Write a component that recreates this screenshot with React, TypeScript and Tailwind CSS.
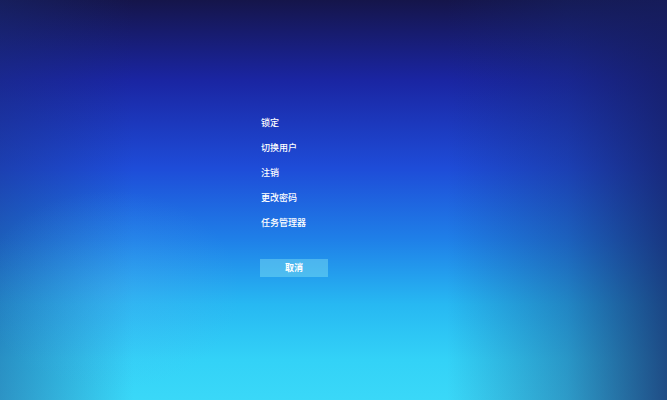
export default function App() {
  const items = ["锁定", "切换用户", "注销", "更改密码", "任务管理器"];
  return (
    <div
      className="w-[667px] h-[400px] overflow-hidden bg-[radial-gradient(ellipse_130px_100px_at_110px_290px,rgba(90,170,240,0.25),transparent),linear-gradient(to_left,rgba(22,30,95,0.75)_0%,rgba(22,40,110,0.35)_15%,transparent_33%),linear-gradient(to_right,rgba(25,45,120,0.4)_0%,transparent_20%),linear-gradient(to_bottom,#15154a_0%,#1a25a2_20%,#1e4cd8_42%,#1f80e8_60%,#27b8f2_76%,#33d2f7_90%,#3ad8f8_100%)]"
      style={{ fontFamily: '"Noto Sans CJK SC", "Noto Sans", sans-serif' }}
    >
      <div className="flex flex-col items-start pl-[261px] pt-[110px]">
        {items.map((t) => (
          <div key={t} className="h-[25px] leading-[25px] text-[9px] text-white font-medium">
            {t}
          </div>
        ))}
        <div className="mt-[24px] w-[68px] h-[18px] flex items-center justify-center bg-[rgba(140,235,245,0.4)] text-[9px] text-white font-bold -ml-[1px]">
          取消
        </div>
      </div>
    </div>
  );
}
